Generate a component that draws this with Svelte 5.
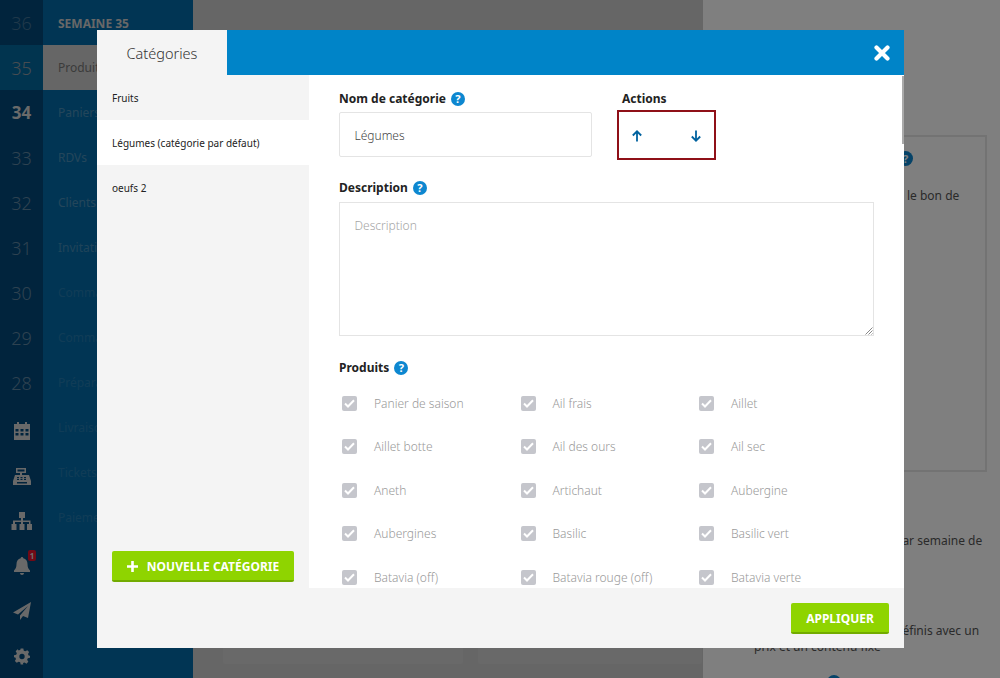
<script lang="ts">
	const weeks = [
		{ n: 36, cls: 'far' },
		{ n: 35, cls: 'current' },
		{ n: 34, cls: 'bold' },
		{ n: 33, cls: '' },
		{ n: 32, cls: '' },
		{ n: 31, cls: '' },
		{ n: 30, cls: '' },
		{ n: 29, cls: '' },
		{ n: 28, cls: '' }
	];
	const menu = [
		{ label: 'Produits', fade: 1 },
		{ label: 'Paniers', fade: 0.32 },
		{ label: 'RDVs', fade: 0.32 },
		{ label: 'Clients', fade: 0.32 },
		{ label: 'Invitations', fade: 0.28 },
		{ label: 'Commandes', fade: 0.14 },
		{ label: 'Commandes', fade: 0.14 },
		{ label: 'Préparation', fade: 0.14 },
		{ label: 'Livraisons', fade: 0.14 },
		{ label: 'Tickets', fade: 0.14 },
		{ label: 'Paiements', fade: 0.14 }
	];
	const categories = [
		{ label: 'Fruits', active: false },
		{ label: 'Légumes (catégorie par défaut)', active: true },
		{ label: 'oeufs 2', active: false }
	];
	const products = [
		'Panier de saison', 'Ail frais', 'Aillet',
		'Aillet botte', 'Ail des ours', 'Ail sec',
		'Aneth', 'Artichaut', 'Aubergine',
		'Aubergines', 'Basilic', 'Basilic vert',
		'Batavia (off)', 'Batavia rouge (off)', 'Batavia verte'
	];
</script>

<div class="app">
	<nav class="rail">
		{#each weeks as w}
			<div class="week {w.cls}">{w.n}</div>
		{/each}
		<div class="tools">
			<div class="tool">
				<svg width="16" height="18" viewBox="0 0 16 18"><path fill-rule="evenodd" d="M3 0h2v2h6V0h2v2h3v16H0V2h3zM1.500 7v2.500h3V7zm5 0v2.500h3V7zm5 0v2.500h3V7zm-10 4v2.500h3V11zm5 0v2.500h3V11zm5 0v2.500h3V11z"/></svg>
			</div>
			<div class="tool">
				<svg width="18" height="17" viewBox="0 0 18 17"><path fill-rule="evenodd" d="M3 0h10v5H9v2h7l2 6v4H0v-4l2-6h5V5H3zm1.500 1.500v2h7v-2zM4 9v1.200h2V9zm3.500 0v1.200h2V9zm3.500 0v1.200h2V9zM4 11v1h2v-1zm3.500 0v1h2v-1zm3.500 0v1h2v-1zM4 14v1.500h10V14z"/></svg>
			</div>
			<div class="tool">
				<svg width="22" height="18" viewBox="0 0 22 18"><path d="M8 0h6v6h-2v2.500h7.500V12H21v6h-5v-6h2V10h-6v2h1.500v6h-5v-6H10v-2H4v2h1.500v6H.5v-6H2V8.500h8V6H8z"/></svg>
			</div>
			<div class="tool">
				<svg width="16" height="18" viewBox="0 0 16 18"><path d="M8 0c.8 0 1.300.6 1.300 1.300C12 2 13.500 4 13.500 7c0 3.500 1 4.800 2.500 6.500V15H0v-1.500C1.500 11.800 2.500 10.500 2.500 7 2.500 4 4 2 6.700 1.300 6.700.6 7.200 0 8 0zM6 16h4c0 1.200-.9 2-2 2s-2-.8-2-2z"/></svg>
				<span class="badge">1</span>
			</div>
			<div class="tool">
				<svg width="18" height="18" viewBox="0 0 18 18"><path d="M18 0 15 16l-5-2-3 4v-4.500L15 4 5 12.500 0 10.500z"/></svg>
			</div>
			<div class="tool">
				<svg width="16" height="17" viewBox="0 0 24 24"><path fill-rule="evenodd" d="M10 0h4l.7 3.300 2.300 1 2.900-1.800 2.800 2.800L21 8.200l1 2.300 2 .5v3l-3.300.7-1 2.300 1.800 2.900-2.800 2.800-2.900-1.800-2.300 1L14 24h-4l-.7-3.300-2.300-1-2.900 1.800-2.800-2.800L3 15.800l-1-2.300L0 13v-3l3.300-.7 1-2.300-1.800-2.900 2.800-2.800L7.200 3l2.300-1zM12 8a4 4 0 1 0 0 8 4 4 0 0 0 0-8z"/></svg>
			</div>
		</div>
	</nav>

	<aside class="side">
		<div class="side-title">SEMAINE 35</div>
		{#each menu as m, i}
			<div class="side-item" class:selected={i === 0}>
				<span style="opacity: {m.fade}">{m.label}</span>
			</div>
		{/each}
	</aside>

	<main class="main">
		<div class="main-fill"></div>
		<div class="main-cards">
			<div class="main-card first"></div>
			<div class="main-card second"></div>
		</div>
	</main>

	<section class="right">
		<div class="info-card">
			<span class="info-help">?</span>
			<p class="p1">le bon de</p>
		</div>
		<p class="p2">par semaine de</p>
		<p class="p3">définis avec un</p>
		<p class="p4">prix et un contenu fixe</p>
		<span class="dot"></span>
	</section>
</div>

<div class="overlay">
	<div class="modal">
		<header class="modal-head">
			<div class="tab">Catégories</div>
			<svg class="close" width="16" height="16" viewBox="0 0 16 16"><path d="M2.500 2.500l11 11M13.500 2.500l-11 11" stroke="#fff" stroke-width="4.200" stroke-linecap="round" /></svg>
		</header>

		<div class="modal-body">
			<div class="cats">
				<ul>
					{#each categories as c}
						<li class:active={c.active}>{c.label}</li>
					{/each}
				</ul>
				<button class="btn new">
					<svg width="11" height="11" viewBox="0 0 11 11"><path d="M5.500 0v11M0 5.500h11" stroke="#fff" stroke-width="2.600" /></svg>
					NOUVELLE CATÉGORIE
				</button>
			</div>

			<div class="content">
				<div class="scroll">
					<div class="top-row">
						<div class="name-col">
							<div class="label">Nom de catégorie <span class="help">?</span></div>
							<div class="input">Légumes</div>
						</div>
						<div class="actions-col">
							<div class="label actions-label">Actions</div>
							<div class="actions">
								<svg width="12" height="12" viewBox="0 0 12 12"><path d="M6 11.500V1.500M1.800 5.500 6 1.300l4.200 4.200" fill="none" stroke="#00629f" stroke-width="1.800" /></svg>
								<svg width="12" height="12" viewBox="0 0 12 12"><path d="M6 .5v10M1.800 6.500 6 10.700l4.200-4.200" fill="none" stroke="#00629f" stroke-width="1.800" /></svg>
							</div>
						</div>
					</div>

					<div class="label desc-label">Description <span class="help">?</span></div>
					<div class="textarea">
						Description
						<svg class="grip" width="8" height="8" viewBox="0 0 8 8"><path d="M7.500 .5l-7 7M7.500 3.500l-4 4M7.500 6.500l-1 1" stroke="#888" stroke-width="1" fill="none" /></svg>
					</div>

					<div class="label prod-label">Produits <span class="help">?</span></div>
					<div class="products">
						{#each products as p}
							<div class="product">
								<span class="check">
									<svg width="11" height="9" viewBox="0 0 11 9"><path d="M1 4.500 4 7.500 10 1.200" fill="none" stroke="#fff" stroke-width="2" /></svg>
								</span>
								<span>{p}</span>
							</div>
						{/each}
					</div>
				</div>
				<div class="scrollbar"></div>
				<footer class="foot">
					<button class="btn apply">APPLIQUER</button>
				</footer>
			</div>
		</div>
	</div>
</div>

<style>
	:global(body) {
		margin: 0;
		font-family: 'Noto Sans', 'Open Sans', sans-serif;
		overflow: hidden;
	}
	.app {
		display: flex;
		width: 1000px;
		height: 678px;
		overflow: hidden;
		background: #ccc;
	}
	.rail {
		width: 43px;
		flex: none;
		background: #02487a;
		color: #fff;
	}
	.week {
		height: 45px;
		display: flex;
		align-items: center;
		justify-content: center;
		font-size: 18px;
		font-weight: 300;
		opacity: 0.42;
		color: #d8d8d8;
	}
	.week.far {
		opacity: 0.28;
	}
	.week.current {
		background: #03699f;
		opacity: 1;
		color: #8f99a2;
	}
	.week.bold {
		font-weight: 700;
		opacity: 1;
		color: #d4d4d4;
		font-size: 17px;
	}
	.tools {
		padding-top: 3.500px;
	}
	.tool {
		height: 45px;
		position: relative;
		display: flex;
		align-items: center;
		justify-content: center;
	}
	.tool svg {
		fill: #d2d2d2;
	}
	.badge {
		position: absolute;
		left: 28px;
		top: 6px;
		width: 8px;
		height: 11px;
		border-radius: 2px;
		background: #e0142c;
		color: #ddd;
		font-size: 8px;
		font-weight: 700;
		line-height: 11px;
		text-align: center;
	}
	.side {
		width: 150px;
		flex: none;
		background: #026aa8;
		color: #fff;
		font-size: 12px;
	}
	.side-title {
		height: 45px;
		line-height: 47px;
		padding-left: 15px;
		font-weight: 700;
		color: #d0d0d0;
	}
	.side-item {
		height: 45px;
		line-height: 45px;
		padding-left: 15px;
		color: #d6d6d6;
	}
	.side-item.selected {
		background: #ccc;
		color: #777;
	}
	.main {
		width: 510px;
		flex: none;
		position: relative;
		display: flex;
		flex-direction: column;
	}
	.main-fill {
		flex: 1;
	}
	.main-cards {
		display: flex;
		padding: 0 1px 14px 30px;
		gap: 15px;
		height: 40px;
	}
	.main-card {
		background: #d3d3d3;
		border-radius: 2px;
	}
	.main-card.first {
		width: 240px;
	}
	.main-card.second {
		width: 224px;
	}
	.right {
		flex: 1;
		background: #fff;
		position: relative;
		color: #555;
		font-size: 12px;
		line-height: 16px;
		display: flex;
		flex-direction: column;
		padding-top: 135px;
	}
	.info-card {
		position: relative;
		width: 284px;
		height: 337px;
		box-sizing: border-box;
		border: 2px solid #e6e6e6;
		flex: none;
	}
	.info-help {
		position: absolute;
		left: 193px;
		top: 14px;
		width: 15px;
		height: 15px;
		border-radius: 50%;
		background: #0d87d0;
		color: #fff;
		font-size: 11px;
		font-weight: 700;
		line-height: 15px;
		text-align: center;
	}
	.p1 {
		margin: 51px 0 0 202px;
		width: 60px;
		white-space: nowrap;
	}
	.p2 {
		margin: 61px 0 0 192px;
		white-space: nowrap;
	}
	.p3 {
		margin: 74px 0 0 192px;
		white-space: nowrap;
	}
	.p4 {
		margin: 0 0 0 51px;
		white-space: nowrap;
	}
	.dot {
		position: absolute;
		left: 124px;
		top: 675px;
		width: 14px;
		height: 14px;
		border-radius: 50%;
		background: #0d87d0;
	}
	.overlay {
		position: fixed;
		inset: 0;
		background: rgba(0, 0, 0, 0.5);
		padding: 30px 96px 30px 97px;
		box-sizing: border-box;
	}
	.modal {
		height: 100%;
		background: #fff;
		display: flex;
		flex-direction: column;
	}
	.modal-head {
		height: 45px;
		flex: none;
		background: #0084c8;
		display: flex;
		align-items: center;
		justify-content: space-between;
		padding-right: 14px;
	}
	.tab {
		width: 130px;
		height: 45px;
		line-height: 46px;
		background: #f4f4f4;
		color: #333;
		font-size: 14.500px;
		font-weight: 300;
		text-align: center;
	}
	.modal-body {
		flex: 1;
		display: flex;
		min-height: 0;
	}
	.cats {
		width: 212px;
		flex: none;
		background: #f4f4f4;
		position: relative;
		color: #222;
		font-size: 10px;
	}
	.cats ul {
		list-style: none;
		margin: 0;
		padding: 0;
	}
	.cats li {
		height: 45px;
		line-height: 47px;
		padding-left: 15px;
	}
	.cats li.active {
		background: #fff;
	}
	.btn {
		border: 0;
		border-bottom: 2px solid #72ab00;
		border-radius: 2px;
		background: #8fd400;
		color: #fff;
		font-family: inherit;
		font-weight: 700;
		font-size: 12px;
		padding: 2px 0 0;
		display: flex;
		align-items: center;
		justify-content: center;
	}
	.new {
		position: absolute;
		left: 15px;
		top: 476px;
		width: 182px;
		height: 31px;
		gap: 9px;
	}
	.content {
		flex: 1;
		display: flex;
		flex-direction: column;
		position: relative;
		min-width: 0;
	}
	.scroll {
		flex: 1;
		overflow: hidden;
		padding: 14px 30px 0;
		min-height: 0;
	}
	.scrollbar {
		position: absolute;
		right: 0;
		top: 1px;
		width: 2.500px;
		height: 68px;
		background: #aaa;
	}
	.top-row {
		display: flex;
	}
	.name-col {
		width: 253px;
	}
	.actions-col {
		margin-left: 25px;
	}
	.label {
		font-size: 12px;
		font-weight: 700;
		line-height: 18px;
		color: #222;
		display: flex;
		align-items: center;
		gap: 5px;
		height: 18px;
		padding-top: 1px;
	}
	.help {
		width: 14px;
		height: 14px;
		border-radius: 50%;
		background: #0d87d0;
		color: #fff;
		font-size: 11px;
		line-height: 14px;
		text-align: center;
	}
	.input {
		height: 45px;
		box-sizing: border-box;
		margin-top: 4px;
		border: 1px solid #e4e4e4;
		border-radius: 2px;
		padding-left: 14.500px;
		line-height: 45px;
		font-size: 12px;
		font-weight: 300;
		color: #444;
	}
	.actions-label {
		padding-left: 5px;
	}
	.actions {
		margin-top: 2px;
		width: 99px;
		height: 50px;
		box-sizing: border-box;
		border: 2px solid #8f1018;
		display: flex;
		align-items: center;
		justify-content: space-between;
		padding: 2px 12px 0 12px;
	}
	.desc-label {
		margin-top: 18px;
	}
	.textarea {
		position: relative;
		margin-top: 5px;
		height: 134px;
		box-sizing: border-box;
		border: 1px solid #e4e4e4;
		padding: 15px 14.500px;
		font-size: 12px;
		font-weight: 300;
		line-height: 16px;
		color: #a5a5a5;
	}
	.grip {
		position: absolute;
		right: 0;
		bottom: 0;
	}
	.prod-label {
		margin-top: 22px;
	}
	.products {
		display: grid;
		grid-template-columns: repeat(3, 178.500px);
		grid-auto-rows: 43.500px;
		margin-top: 4.600px;
		font-size: 12px;
		font-weight: 300;
		color: #999;
	}
	.product {
		display: flex;
		align-items: center;
		padding-left: 3px;
		gap: 17px;
	}
	.check {
		width: 15px;
		height: 15px;
		flex: none;
		border-radius: 2px;
		background: #c5c6cc;
		display: flex;
		align-items: center;
		justify-content: center;
	}
	.foot {
		height: 60px;
		flex: none;
		background: #f4f4f4;
		display: flex;
		justify-content: flex-end;
		align-items: center;
		padding-right: 15px;
	}
	.apply {
		width: 98px;
		height: 31px;
	}
</style>
